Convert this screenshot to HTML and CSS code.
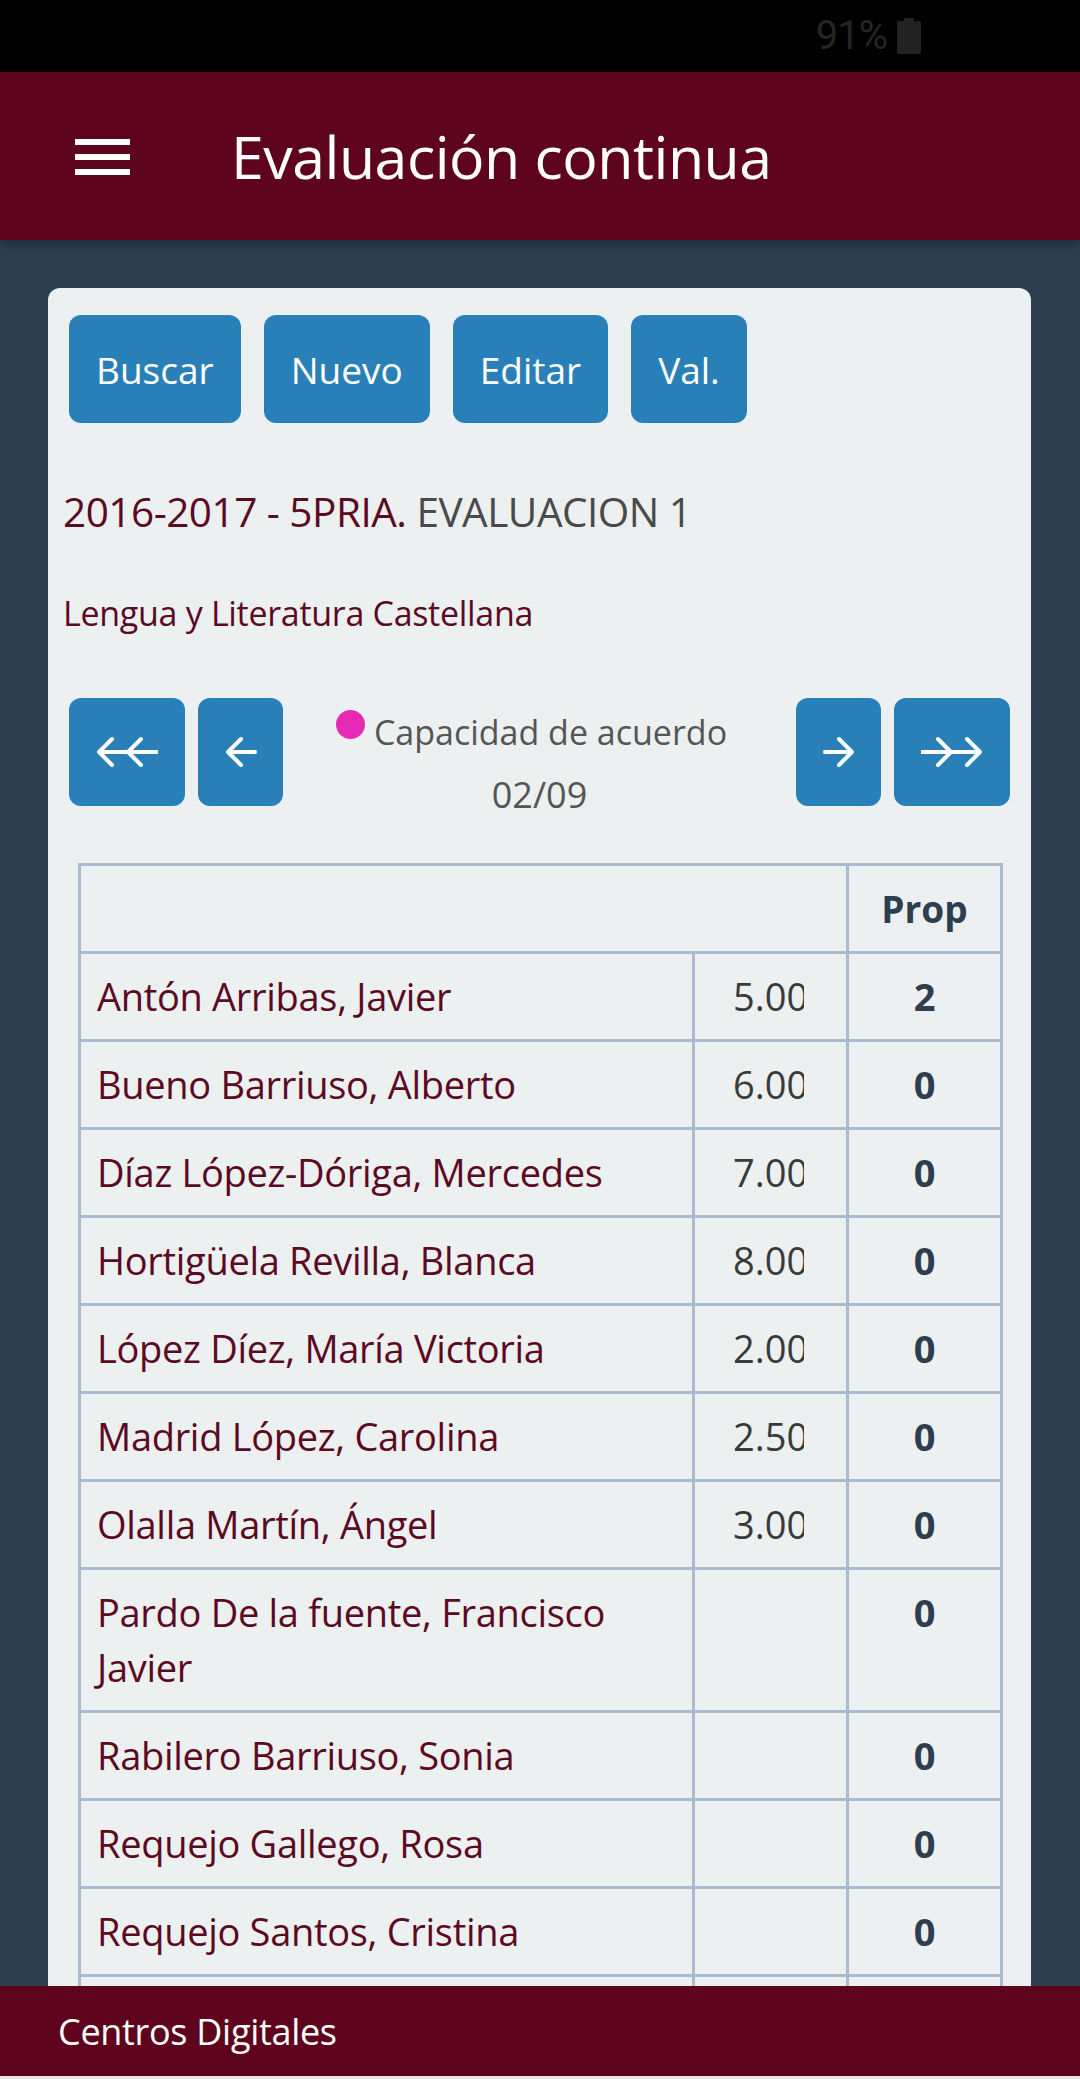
FILE: index.html
```html
<!DOCTYPE html>
<html lang="es">
<head>
<meta charset="utf-8">
<title>Evaluación continua</title>
<link rel="stylesheet" href="styles.css">
</head>
<body>
<div class="statusbar">
  <span class="pct">91%</span>
  <svg class="battery" width="24" height="36" viewBox="0 0 24 36"><rect x="7" y="0" width="10" height="4" fill="#222"/><rect x="0" y="3" width="24" height="33" rx="2" fill="#222"/></svg>
</div>
<header class="appbar">
  <div class="burger"><span></span><span></span><span></span></div>
  <h1 class="apptitle">Evaluación continua</h1>
</header>
<main class="content">
  <section class="card">
    <div class="actions">
      <button class="btn">Buscar</button>
      <button class="btn">Nuevo</button>
      <button class="btn">Editar</button>
      <button class="btn">Val.</button>
    </div>
    <h2 class="title"><span class="maroon">2016-2017 - 5PRIA.</span> EVALUACION 1</h2>
    <p class="subject">Lengua y Literatura Castellana</p>
    <div class="navrow">
      <div class="navgroup">
        <button class="nbtn wide"><svg width="62" height="32" viewBox="0 0 62 32"><path d="M3 16H61M16 3L3 16L16 29M45 3L32 16L45 29" fill="none" stroke="#fff" stroke-width="4" stroke-linecap="round" stroke-linejoin="round"/></svg></button>
        <button class="nbtn"><svg width="32" height="32" viewBox="0 0 32 32"><path d="M3 16H30M16 3L3 16L16 29" fill="none" stroke="#fff" stroke-width="4" stroke-linecap="round" stroke-linejoin="round"/></svg></button>
      </div>
      <div class="navinfo">
        <div class="navname"><span class="dot"></span>Capacidad de acuerdo</div>
        <div class="navcount">02/09</div>
      </div>
      <div class="navgroup">
        <button class="nbtn"><svg width="32" height="32" viewBox="0 0 32 32"><path d="M2 16H29M16 3L29 16L16 29" fill="none" stroke="#fff" stroke-width="4" stroke-linecap="round" stroke-linejoin="round"/></svg></button>
        <button class="nbtn wide"><svg width="62" height="32" viewBox="0 0 62 32"><path d="M1 16H59M46 3L59 16L46 29M17 3L30 16L17 29" fill="none" stroke="#fff" stroke-width="4" stroke-linecap="round" stroke-linejoin="round"/></svg></button>
      </div>
    </div>
    <table class="grid">
      <colgroup><col class="c-name"><col class="c-num"><col class="c-prop"></colgroup>
      <thead>
        <tr><th colspan="2"></th><th class="prop">Prop</th></tr>
      </thead>
      <tbody>
        <tr><td class="name">Antón Arribas, Javier</td><td class="num"><span>5.00</span></td><td class="prop">2</td></tr>
        <tr><td class="name">Bueno Barriuso, Alberto</td><td class="num"><span>6.00</span></td><td class="prop">0</td></tr>
        <tr><td class="name">Díaz López-Dóriga, Mercedes</td><td class="num"><span>7.00</span></td><td class="prop">0</td></tr>
        <tr><td class="name">Hortigüela Revilla, Blanca</td><td class="num"><span>8.00</span></td><td class="prop">0</td></tr>
        <tr><td class="name">López Díez, María Victoria</td><td class="num"><span>2.00</span></td><td class="prop">0</td></tr>
        <tr><td class="name">Madrid López, Carolina</td><td class="num"><span>2.50</span></td><td class="prop">0</td></tr>
        <tr><td class="name">Olalla Martín, Ángel</td><td class="num"><span>3.00</span></td><td class="prop">0</td></tr>
        <tr><td class="name">Pardo De la fuente, Francisco Javier</td><td class="num"></td><td class="prop">0</td></tr>
        <tr><td class="name">Rabilero Barriuso, Sonia</td><td class="num"></td><td class="prop">0</td></tr>
        <tr><td class="name">Requejo Gallego, Rosa</td><td class="num"></td><td class="prop">0</td></tr>
        <tr><td class="name">Requejo Santos, Cristina</td><td class="num"></td><td class="prop">0</td></tr>
        <tr><td class="name">&nbsp;</td><td class="num"></td><td class="prop">0</td></tr>
      </tbody>
    </table>
  </section>
</main>
<footer class="footer">Centros Digitales</footer>
</body>
</html>
```
FILE: styles.css
```css
* { box-sizing: border-box; }
html, body { margin: 0; padding: 0; }
body {
  background: #2c3e50;
  font-family: "Open Sans", "Noto Sans", sans-serif;
  width: 1080px;
  overflow: hidden;
}
.statusbar {
  height: 72px;
  background: #000;
  display: flex;
  align-items: center;
  justify-content: flex-end;
  padding-right: 159px;
  gap: 10px;
}
.pct {
  font-family: Roboto, sans-serif;
  font-size: 40px;
  color: #252525;
  letter-spacing: -1px;
  line-height: 1;
}
.battery { display: block; }
.appbar {
  height: 168px;
  background: #5e051d;
  display: flex;
  align-items: center;
  padding-left: 75px;
  box-shadow: 0 3px 10px rgba(0,0,0,0.35);
  position: relative;
}
.burger {
  width: 55px;
  display: flex;
  flex-direction: column;
  gap: 9px;
  margin-top: 2px;
}
.burger span { display: block; height: 6px; background: #fff; }
.apptitle {
  margin: 0 0 0 101px;
  color: #fff;
  font-weight: 400;
  font-size: 59px;
  letter-spacing: -0.5px;
}
.content { padding: 48px 49px 200px 48px; }
.card {
  background: #ecf0f1;
  border-radius: 12px;
  padding: 27px 21px 40px 21px;
}
.actions { display: flex; gap: 23px; }
.btn {
  background: #2980b9;
  color: #fff;
  border: 0;
  border-radius: 12px;
  height: 108px;
  padding: 0 27px;
  font-family: inherit;
  font-size: 37px;
}
.title {
  margin: 61px 0 0 -6px;
  font-weight: 400;
  font-size: 40.5px;
  line-height: 56px;
  color: #4a4a4a;
  letter-spacing: -0.5px;
}
.maroon { color: #5c0a1f; }
.subject {
  margin: 52px 0 0 -6px;
  font-size: 34px;
  line-height: 42px;
  color: #5c0a1f;
  letter-spacing: -0.3px;
}
.navrow {
  margin-top: 64px;
  display: flex;
  justify-content: space-between;
  align-items: flex-start;
}
.navgroup { display: flex; gap: 13px; }
.nbtn {
  background: #2980b9;
  border: 0;
  border-radius: 12px;
  height: 108px;
  width: 85px;
  padding: 0;
  display: flex;
  align-items: center;
  justify-content: center;
}
.nbtn.wide { width: 116px; }
.navinfo {
  flex: 1;
  text-align: center;
  color: #555;
  font-size: 34px;
  padding-top: 12px;
}
.navname { line-height: 44px; padding-right: 16px; white-space: nowrap; }
.navcount { line-height: 44px; margin-top: 19px; font-size: 36px; }
.dot {
  display: inline-block;
  width: 29px;
  height: 29px;
  border-radius: 50%;
  background: #e52bb5;
  margin-right: 9px;
  vertical-align: 6px;
}
.grid {
  margin: 46px 10px 0 9px;
  width: 922px;
  border-collapse: collapse;
  table-layout: fixed;
}
.c-name { width: 614px; }
.c-num { width: 154px; }
.c-prop { width: 154px; }
.grid th, .grid td {
  border: 3px solid #a9bccf;
  padding: 15px 16px;
  font-size: 38px;
  line-height: 55px;
  vertical-align: top;
  height: 88px;
}
.grid td.name { color: #5c0a1f; text-align: left; letter-spacing: -0.3px; }
.grid td.num { text-align: left; color: #3a3a3a; padding-left: 38px; padding-right: 0; }
.num span {
  display: inline-block;
  width: 71px;
  overflow: hidden;
  white-space: nowrap;
  text-align: left;
  vertical-align: top;
}
.prop { text-align: center; font-weight: 700; color: #2c3e50; }
.grid th.prop { font-size: 37px; }
.footer {
  position: fixed;
  left: 0;
  right: 0;
  bottom: 0;
  height: 93px;
  background: #5e051d;
  border-bottom: 3px solid #e6e6e6;
  color: #fff;
  font-size: 36px;
  padding-left: 58px;
  display: flex;
  align-items: center;
  letter-spacing: -0.3px;
}
```
